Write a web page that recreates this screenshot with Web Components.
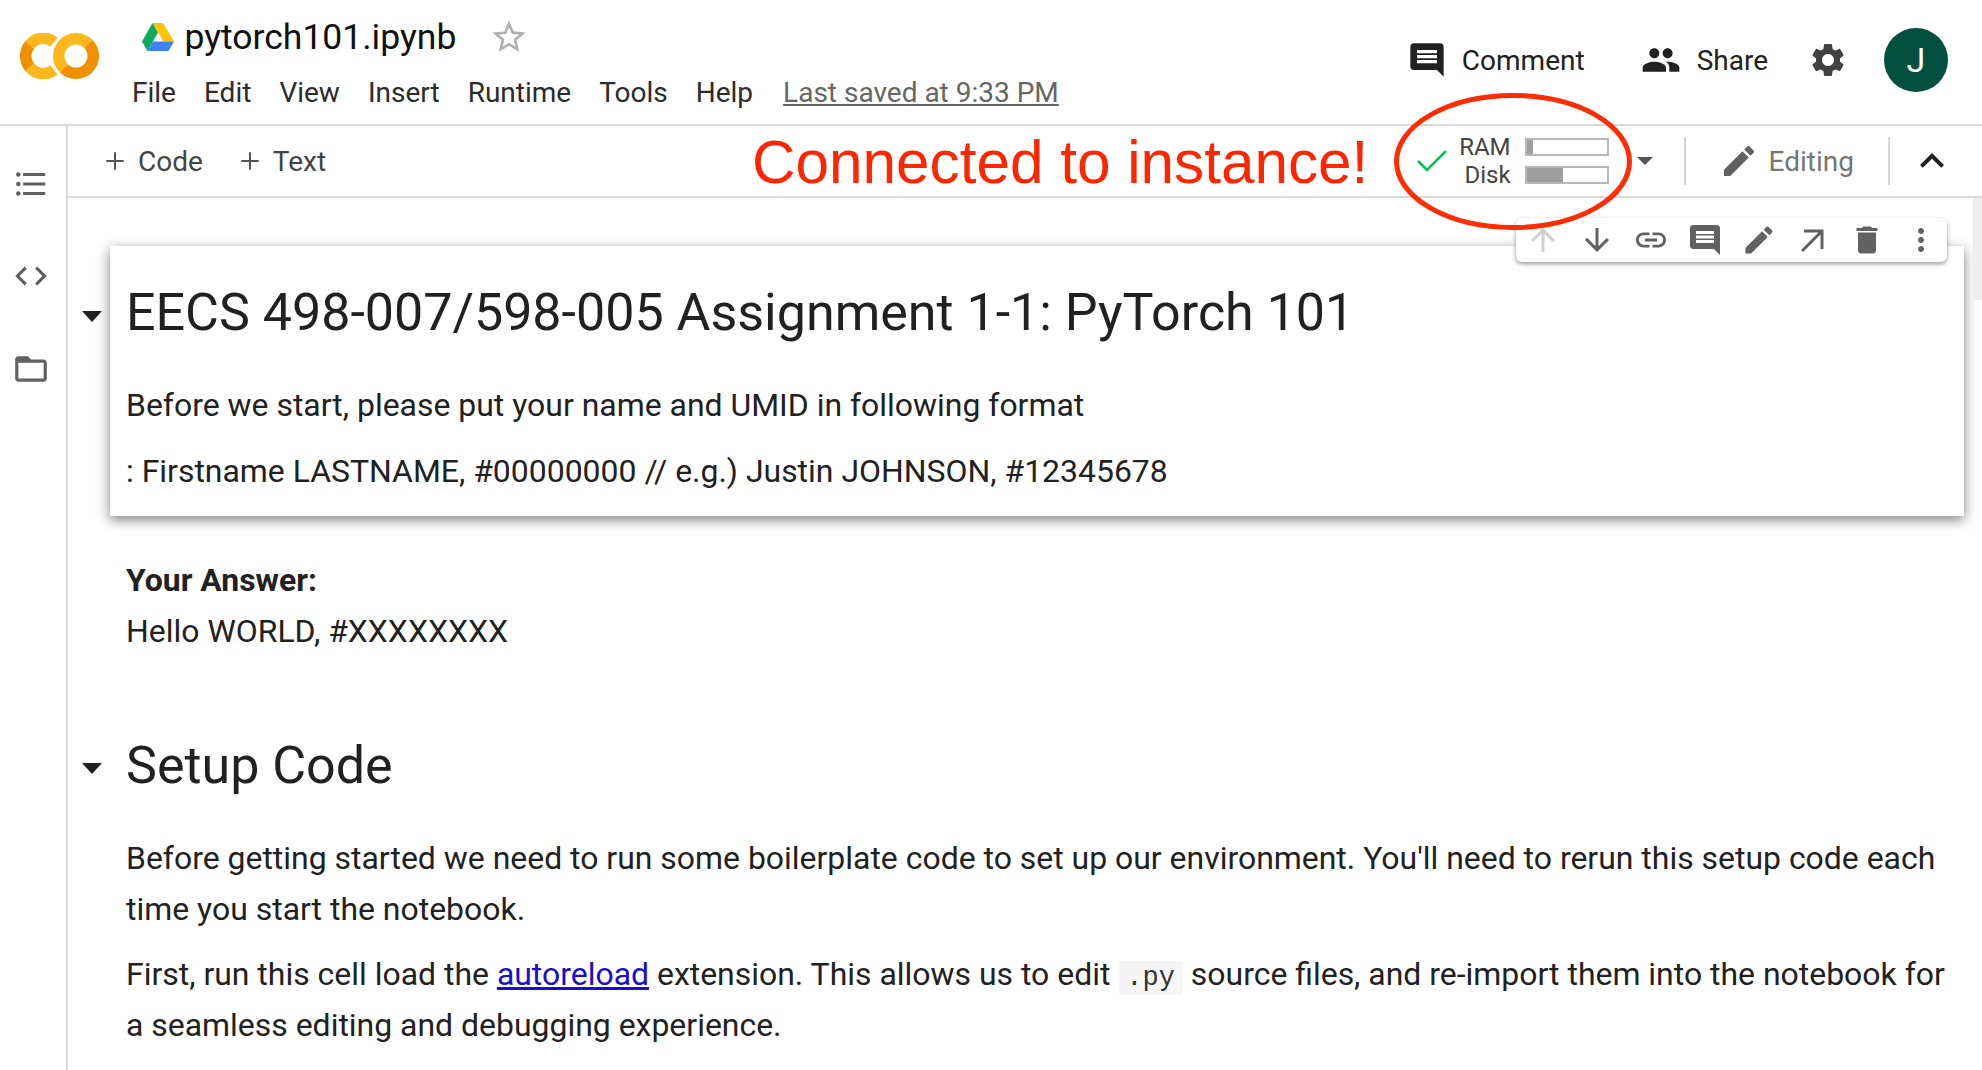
<!DOCTYPE html>
<html>
<head>
<meta charset="utf-8">
<title>pytorch101.ipynb</title>
<style>
html, body { margin: 0; padding: 0; height: 100%; overflow: hidden; background: #fff; }
body { font-family: Roboto, sans-serif; color: #212121; }
</style>
</head>
<body>
<colab-app></colab-app>
<script>
const icons = {
    comment: '<path d="M21.99 4c0-1.1-.89-2-1.99-2H4c-1.1 0-2 .9-2 2v12c0 1.1.9 2 2 2h14l4 4-.01-18zM18 14H6v-2h12v2zm0-3H6V9h12v2zm0-3H6V6h12v2z"/>',
    people: '<path d="M16 11c1.66 0 2.99-1.34 2.99-3S17.66 5 16 5c-1.66 0-3 1.34-3 3s1.34 3 3 3zm-8 0c1.66 0 2.99-1.34 2.99-3S9.66 5 8 5C6.34 5 5 6.34 5 8s1.34 3 3 3zm0 2c-2.33 0-7 1.17-7 3.5V19h14v-2.5c0-2.33-4.67-3.5-7-3.5zm8 0c-.29 0-.62.02-.97.05 1.16.84 1.97 1.97 1.97 3.45V19h6v-2.5c0-2.33-4.67-3.5-7-3.5z"/>',
    gear: '<path d="M19.14 12.94c.04-.3.06-.61.06-.94 0-.32-.02-.64-.07-.94l2.03-1.58c.18-.14.23-.41.12-.61l-1.92-3.32c-.12-.22-.37-.29-.59-.22l-2.39.96c-.5-.38-1.03-.7-1.62-.94l-.36-2.54c-.04-.24-.24-.41-.48-.41h-3.84c-.24 0-.43.17-.47.41l-.36 2.54c-.59.24-1.13.57-1.62.94l-2.39-.96c-.22-.08-.47 0-.59.22L2.74 8.87c-.12.21-.08.47.12.61l2.03 1.58c-.05.3-.09.63-.09.94s.02.64.07.94l-2.03 1.58c-.18.14-.23.41-.12.61l1.92 3.32c.12.22.37.29.59.22l2.39-.96c.5.38 1.03.7 1.62.94l.36 2.54c.05.24.24.41.48.41h3.84c.24 0 .44-.17.47-.41l.36-2.54c.59-.24 1.13-.56 1.62-.94l2.39.96c.22.08.47 0 .59-.22l1.92-3.32c.12-.22.07-.47-.12-.61l-2.01-1.58zM12 15.6c-1.98 0-3.6-1.62-3.6-3.6s1.62-3.6 3.6-3.6 3.6 1.62 3.6 3.6-1.62 3.6-3.6 3.6z"/>',
    pencil: '<path d="M3 17.25V21h3.75L17.81 9.94l-3.75-3.75L3 17.25zM20.71 7.04c.39-.39.39-1.02 0-1.41l-2.34-2.34c-.39-.39-1.02-.39-1.41 0l-1.83 1.83 3.75 3.75 1.83-1.83z"/>',
    up: '<path d="M4 12l1.41 1.41L11 7.83V20h2V7.83l5.58 5.59L20 12l-8-8-8 8z"/>',
    down: '<path d="M20 12l-1.41-1.41L13 16.17V4h-2v12.17l-5.58-5.59L4 12l8 8 8-8z"/>',
    link: '<path d="M3.9 12c0-1.71 1.39-3.1 3.1-3.1h4V7H7c-2.76 0-5 2.24-5 5s2.24 5 5 5h4v-1.9H7c-1.71 0-3.1-1.39-3.1-3.1zM8 13h8v-2H8v2zm9-6h-4v1.9h4c1.71 0 3.1 1.39 3.1 3.1s-1.39 3.1-3.1 3.1h-4V17h4c2.76 0 5-2.24 5-5s-2.24-5-5-5z"/>',
    open: '<path d="M6 5v2h9.59L4 18.59 5.41 20 17 8.41V18h2V5z"/>',
    trash: '<path d="M6 19c0 1.1.9 2 2 2h8c1.1 0 2-.9 2-2V7H6v12zM19 4h-3.5l-1-1h-5l-1 1H5v2h14V4z"/>',
    dots: '<path d="M12 8c1.1 0 2-.9 2-2s-.9-2-2-2-2 .9-2 2 .9 2 2 2zm0 2c-1.1 0-2 .9-2 2s.9 2 2 2 2-.9 2-2-.9-2-2-2zm0 6c-1.1 0-2 .9-2 2s.9 2 2 2 2-.9 2-2-.9-2-2-2z"/>',
    list: '<path d="M7 5h14v2H7zM7 11h14v2H7zM7 17h14v2H7z"/><circle cx="4" cy="6" r="1.4"/><circle cx="4" cy="12" r="1.4"/><circle cx="4" cy="18" r="1.4"/>',
    code: '<path d="M9.4 16.6L4.8 12l4.6-4.6L8 6l-6 6 6 6 1.4-1.4zm5.2 0l4.6-4.6-4.6-4.6L16 6l6 6-6 6-1.4-1.4z"/>',
    folder: '<path d="M20 6h-8l-2-2H4c-1.1 0-2 .9-2 2v12c0 1.1.9 2 2 2h16c1.1 0 2-.9 2-2V8c0-1.1-.9-2-2-2zm0 12H4V8h16v10z"/>',
    plus: '<path d="M19 12.8h-6.2V19h-1.6v-6.2H5v-1.6h6.2V5h1.6v6.2H19z"/>',
    star: '<path d="M22 9.24l-7.19-.62L12 2 9.19 8.63 2 9.24l5.46 4.73L5.82 21 12 17.27 18.18 21l-1.63-7.03L22 9.24zM12 15.4l-3.76 2.27 1-4.28-3.32-2.88 4.38-.38L12 6.1l1.71 4.04 4.38.38-3.32 2.88 1 4.28L12 15.4z"/>',
    chevron: '<path d="M7.41 15.41L12 10.83l4.59 4.58L18 14l-6-6-6 6z"/>'
};

function icon(name, size, color) {
    return `<svg xmlns="http://www.w3.org/2000/svg" viewBox="0 0 24 24" width="${size}" height="${size}" fill="${color}" style="display:block;flex:none">${icons[name]}</svg>`;
}

class ColabLogo extends HTMLElement {
    connectedCallback() {
        this.attachShadow({ mode: 'open' }).innerHTML = `
            <style>:host { display: block; width: 79px; height: 46px; flex: none; }</style>
            <svg xmlns="http://www.w3.org/2000/svg" viewBox="0 0 79 46" width="79" height="46" fill="none" stroke-width="11.5">
                <path d="M9.8 11.8 A17.25 17.25 0 0 0 9.8 34.2" stroke="#F29100"/>
                <path d="M9.8 11.8 A17.25 17.25 0 0 1 34 9" stroke="#FFB71B"/>
                <path d="M9.8 34.2 A17.25 17.25 0 0 0 34 37" stroke="#FFB71B"/>
                <path d="M43.8 35.2 A17.25 17.25 0 0 0 68.2 10.8" stroke="#F29100"/>
                <path d="M43.8 35.2 A17.25 17.25 0 0 1 68.2 10.8" stroke="#FFB71B"/>
            </svg>
        `;
    }
}
customElements.define('colab-logo', ColabLogo);

class DriveLogo extends HTMLElement {
    connectedCallback() {
        this.attachShadow({ mode: 'open' }).innerHTML = `
            <style>:host { display: block; width: 32px; height: 28px; flex: none; }</style>
            <svg xmlns="http://www.w3.org/2000/svg" viewBox="0 0 32 28" width="32" height="28">
                <path d="M10.5 0H21l11 18.5H21.5z" fill="#FFC10A"/>
                <path d="M10.5 0L0 18.5 5.5 28 16 9.5z" fill="#0DA960"/>
                <path d="M11 18.5h21L26.5 28h-21z" fill="#3F83F0"/>
            </svg>
        `;
    }
}
customElements.define('drive-logo', DriveLogo);

class ColabHeader extends HTMLElement {
    connectedCallback() {
        const menus = ['File', 'Edit', 'View', 'Insert', 'Runtime', 'Tools', 'Help'];
        this.attachShadow({ mode: 'open' }).innerHTML = `
            <style>
                :host { display: flex; height: 124px; flex: none; border-bottom: 2px solid #dadada; align-items: flex-start; }
                colab-logo { margin: 33px 0 0 20px; }
                .doc { margin-left: 33px; padding-top: 13px; flex: 1; }
                .title { display: flex; align-items: center; height: 48px; padding-left: 10px; }
                .name { font-size: 35.5px; color: #111; margin-left: 10.5px; line-height: 48px; }
                .star { margin-left: 33px; }
                .menu { display: flex; gap: 28px; margin-top: 15px; font-size: 28px; color: #2b2b2b; align-items: baseline; }
                .saved { margin-left: 2px; color: #666; text-decoration: underline; }
                .right { display: flex; align-items: center; height: 120px; padding-right: 34px; font-size: 28px; color: #212121; }
                .comment { margin-right: 56px; display: flex; align-items: center; gap: 15px; }
                .share { margin-right: 40px; display: flex; align-items: center; gap: 16px; }
                .avatar { width: 64px; height: 64px; border-radius: 50%; background: #04503f; color: #fff; display: flex; align-items: center; justify-content: center; font-size: 34px; margin-left: 36px; }
            </style>
            <colab-logo></colab-logo>
            <div class="doc">
                <div class="title">
                    <drive-logo></drive-logo>
                    <div class="name">pytorch101.ipynb</div>
                    <div class="star">${icon('star', 40, '#b0b0b0')}</div>
                </div>
                <div class="menu">
                    ${menus.map(m => `<div>${m}</div>`).join('')}
                    <div class="saved">Last saved at 9:33 PM</div>
                </div>
            </div>
            <div class="right">
                <div class="comment">${icon('comment', 40, '#212121')}<span>Comment</span></div>
                <div class="share">${icon('people', 40, '#212121')}<span>Share</span></div>
                ${icon('gear', 40, '#424242')}
                <div class="avatar">J</div>
            </div>
        `;
    }
}
customElements.define('colab-header', ColabHeader);

class ResourceMeter extends HTMLElement {
    connectedCallback() {
        const rows = [['RAM', 8], ['Disk', 46]];
        this.attachShadow({ mode: 'open' }).innerHTML = `
            <style>
                :host { display: flex; align-items: center; flex: none; }
                .rows { display: grid; grid-template-columns: auto 84px; column-gap: 14px; row-gap: 10px; margin-left: 12px; font-size: 24px; color: #444; align-items: center; line-height: 18px; }
                .label { text-align: right; }
                .bar { height: 18px; box-sizing: border-box; border: 2px solid #b8b8b8; }
                .fill { height: 100%; background: #9e9e9e; }
                .caret { width: 0; height: 0; border-left: 8px solid transparent; border-right: 8px solid transparent; border-top: 8px solid #555; margin-left: 28px; margin-right: 31px; }
            </style>
            <svg xmlns="http://www.w3.org/2000/svg" width="30" height="22" viewBox="0 0 30 22" style="display:block;flex:none"><path d="M1 11l9 9L29 1" fill="none" stroke="#00c853" stroke-width="2.6"/></svg>
            <div class="rows">
                ${rows.map(r => `<div class="label">${r[0]}</div><div class="bar"><div class="fill" style="width:${r[1]}%"></div></div>`).join('')}
            </div>
            <div class="caret"></div>
        `;
    }
}
customElements.define('resource-meter', ResourceMeter);

class ColabToolbar extends HTMLElement {
    connectedCallback() {
        this.attachShadow({ mode: 'open' }).innerHTML = `
            <style>
                :host { display: flex; height: 70px; flex: none; align-items: center; border-bottom: 2px solid #dadada; padding-left: 32px; font-size: 28px; color: #444; position: relative; }
                .add { display: flex; align-items: center; margin-right: 32px; gap: 8px; }
                .spacer { flex: 1; }
                .sep { width: 2px; height: 48px; background: #d6d6d6; flex: none; }
                .edit { display: flex; align-items: center; gap: 10px; padding: 0 34px 0 33px; color: #777; font-size: 28px; }
                .collapse { padding: 0 26px 0 18px; }
                .note { position: absolute; left: 684px; top: 1px; font: 60.25px "Liberation Sans", Arial, sans-serif; color: #fe2600; white-space: nowrap; line-height: 70px; }
            </style>
            <div class="add">${icon('plus', 30, '#555')}<span>Code</span></div>
            <div class="add">${icon('plus', 30, '#555')}<span>Text</span></div>
            <div class="spacer"></div>
            <div class="note">Connected to instance!</div>
            <resource-meter></resource-meter>
            <div class="sep"></div>
            <div class="edit">${icon('pencil', 40, '#616161')}<span>Editing</span></div>
            <div class="sep"></div>
            <div class="collapse">${icon('chevron', 48, '#212121')}</div>
        `;
    }
}
customElements.define('colab-toolbar', ColabToolbar);

class ColabSidebar extends HTMLElement {
    connectedCallback() {
        this.attachShadow({ mode: 'open' }).innerHTML = `
            <style>
                :host { display: flex; flex-direction: column; align-items: center; width: 61px; flex: none; border-right: 2px solid #dadada; padding: 38.5px 5px 0 0; gap: 54.5px; }
            </style>
            ${icon('list', 38, '#616161')}
            ${icon('code', 38, '#616161')}
            ${icon('folder', 38, '#616161')}
        `;
    }
}
customElements.define('colab-sidebar', ColabSidebar);

class CellToolbar extends HTMLElement {
    connectedCallback() {
        const items = [['up', '#cfcfcf'], ['down', '#616161'], ['link', '#616161'], ['comment', '#616161'], ['pencil', '#616161'], ['open', '#616161'], ['trash', '#616161'], ['dots', '#616161']];
        this.attachShadow({ mode: 'open' }).innerHTML = `
            <style>
                :host { display: flex; position: absolute; right: 35px; top: 20px; height: 44px; align-items: center; background: #fff; border-radius: 6px; box-shadow: 0 2px 4px rgba(0,0,0,.4); padding: 0 8px 0 9px; gap: 18px; z-index: 3; }
            </style>
            ${items.map(i => icon(i[0], 36, i[1])).join('')}
        `;
    }
}
customElements.define('cell-toolbar', CellToolbar);

class SectionCell extends HTMLElement {
    connectedCallback() {
        this.attachShadow({ mode: 'open' }).innerHTML = `
            <style>
                :host { display: block; position: relative; padding-left: 42px; margin-right: 18px; }
                :host([selected]) .body { box-shadow: 0 4px 12px rgba(0,0,0,.5); }
                .body { padding: 0 6px 0 16px; background: #fff; }
                .caret { display: none; position: absolute; left: 14px; width: 0; height: 0; border-left: 10px solid transparent; border-right: 10px solid transparent; border-top: 11px solid #212121; top: var(--caret-top, 65px); }
                :host([collapsible]) .caret { display: block; }
            </style>
            <div class="caret"></div>
            <div class="body"><slot></slot></div>
        `;
    }
}
customElements.define('section-cell', SectionCell);

class ColabNotebook extends HTMLElement {
    connectedCallback() {
        this.attachShadow({ mode: 'open' }).innerHTML = `
            <style>
                :host { display: block; flex: 1; position: relative; overflow: hidden; padding-top: 48px; color: #212121; font-size: 31.95px; line-height: 50.5px; }
                h1, h2 { font-weight: 400; margin: 0; font-size: 52px; line-height: 60px; }
                h1 { padding: 37px 0 37px; }
                h2 { padding: 0 0 37px; }
                p { margin: 0 0 15px; }
                .code { font: 27px "Liberation Mono", monospace; color: #333; background: #f5f5f5; padding: 2px 7px; border-radius: 3px; margin: 0 1px; }
                a { color: #1a0dcc; }
                .scroll { position: absolute; right: 0; top: 0; width: 9px; height: 102px; background: #eee; }
                section-cell.top { --caret-top: 65px; }
                section-cell.setup { margin-top: 80px; --caret-top: 27px; }
            </style>
            <cell-toolbar></cell-toolbar>
            <section-cell class="top" selected collapsible>
                <h1>EECS 498-007/598-005 Assignment 1-1: PyTorch 101</h1>
                <p>Before we start, please put your name and UMID in following format</p>
                <p style="margin:0;padding-bottom:20px">: Firstname LASTNAME, #00000000 // e.g.) Justin JOHNSON, #12345678</p>
            </section-cell>
            <section-cell style="margin-top:39px">
                <p style="margin:0"><b style="font-weight:700">Your Answer:</b><br>Hello WORLD, #XXXXXXXX</p>
            </section-cell>
            <section-cell class="setup" collapsible>
                <h2>Setup Code</h2>
                <p>Before getting started we need to run some boilerplate code to set up our environment. You'll need to rerun this setup code each<br>time you start the notebook.</p>
                <p>First, run this cell load the <a href="#">autoreload</a> extension. This allows us to edit <span class="code">.py</span> source files, and re-import them into the notebook for<br>a seamless editing and debugging experience.</p>
            </section-cell>
            <div class="scroll"></div>
        `;
    }
}
customElements.define('colab-notebook', ColabNotebook);

class ColabApp extends HTMLElement {
    connectedCallback() {
        this.attachShadow({ mode: 'open' }).innerHTML = `
            <style>
                :host { display: flex; flex-direction: column; height: 1070px; width: 1982px; position: relative; overflow: hidden; background: #fff; }
                .main { display: flex; flex: 1; min-height: 0; }
                .content { display: flex; flex-direction: column; flex: 1; min-width: 0; }
                .ring { position: absolute; left: 1392px; top: 90px; z-index: 5; pointer-events: none; }
            </style>
            <colab-header></colab-header>
            <div class="main">
                <colab-sidebar></colab-sidebar>
                <div class="content">
                    <colab-toolbar></colab-toolbar>
                    <colab-notebook></colab-notebook>
                </div>
            </div>
            <svg class="ring" xmlns="http://www.w3.org/2000/svg" width="244" height="145" viewBox="0 0 244 145">
                <ellipse cx="121" cy="71.5" rx="116.5" ry="66" fill="none" stroke="#fe2c02" stroke-width="5"/>
            </svg>
        `;
    }
}
customElements.define('colab-app', ColabApp);
</script>
</body>
</html>
